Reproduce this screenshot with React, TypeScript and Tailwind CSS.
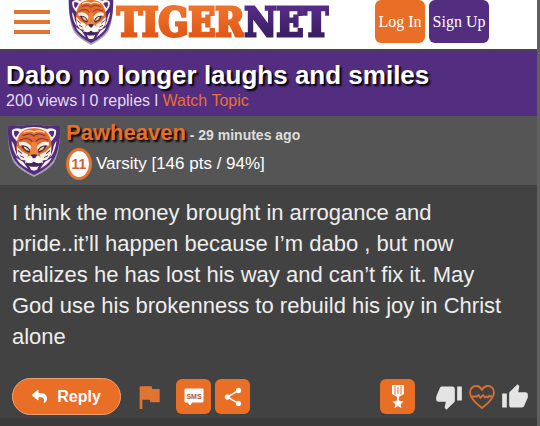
import React from 'react';
import { MdFlag, MdShare, MdThumbDown, MdThumbUp } from 'react-icons/md';
import { FaReply } from 'react-icons/fa';

function TigerShield({ className }: { className: string }) {
    return (
        <svg viewBox="0 0 54 52" preserveAspectRatio="none" className={className} aria-hidden="true">
            {/* shield */}
            <path d="M1 3 Q8 0 14 2 Q27 -1 40 2 Q46 0 53 3 C53.500 16 52 29 47 38 Q42 45 27 52 Q12 45 7 38 C2 29 0.500 16 1 3Z" fill="#a9a0b4" />
            <path d="M1 2.500 Q8 0 14 2 Q27 -1 40 2 Q46 0 53 2.500 C53.500 15 51.500 28 46 36 Q40 44 27 50 Q14 44 8 36 C2.500 28 0.500 15 1 2.500Z" fill="#522d80" />
            {/* light fur around the head */}
            <path d="M14 5 Q27 1 40 5 Q45 3 49 6 Q50 11 46 15 L44 17 L10 17 L8 15 Q4 11 5 6 Q9 3 14 5Z" fill="#fbf3df" />
            <path d="M4.500 17 Q7 19 8 25 L11 33 Q6 28 4.500 17ZM49.500 17 Q47 19 46 25 L43 33 Q48 28 49.500 17Z" fill="#fbf3df" />
            <path d="M9 33 L16 37 L21 44 Q12 39 9 33ZM45 33 L38 37 L33 44 Q42 39 45 33Z" fill="#fbf3df" />
            {/* ears */}
            <path d="M7 7 Q10 6 12.500 8 L9 13 Q6.500 11 7 7ZM47 7 Q44 6 41.500 8 L45 13 Q47.500 11 47 7Z" fill="#522d80" />
            {/* face */}
            <path d="M10 17 Q12 8 19 5.500 Q27 3 35 5.500 Q42 8 44 17 L45 24 L43 30 L37 34 L17 34 L11 30 L9 24Z" fill="#e46a28" />
            {/* forehead stripes */}
            <g fill="none" strokeLinecap="round">
                <path d="M17 8 Q23 5.500 27 8 Q31 5.500 37 8" stroke="#fbe3bd" strokeWidth="1.300" />
                <path d="M16 11.500 Q23 8 27 12 Q31 8 38 11.500" stroke="#743055" strokeWidth="1" />
                <path d="M13 16 Q21 12 25 17 M41 16 Q33 12 29 17" stroke="#743055" strokeWidth="1" />
            </g>
            {/* brows and eyes */}
            <path d="M12 18 Q20 15.500 25 23 L24 27 Q20 21 12 21ZM42 18 Q34 15.500 29 23 L30 27 Q34 21 42 21Z" fill="#fbf3df" />
            <path d="M14 21 Q21 20 24 27 L22.500 28.500 Q16 26 14 21ZM40 21 Q33 20 30 27 L31.500 28.500 Q38 26 40 21Z" fill="#44265f" />
            <path d="M16.500 22 Q20 22 22.500 26.500 Q18 26 16.500 22ZM37.500 22 Q34 22 31.500 26.500 Q36 26 37.500 22Z" fill="#f5e45c" />
            {/* cheeks */}
            <path d="M10 22 L15 27 L21 30 L20 36 L14 35 L10 30ZM44 22 L39 27 L33 30 L34 36 L40 35 L44 30Z" fill="#fbf3df" />
            <path d="M11 26 L15 29 M13 31 L17 33 M43 26 L39 29 M41 31 L37 33" stroke="#522d80" strokeWidth="1" />
            {/* nose and mouth */}
            <path d="M25 18 L29 18 L32 31 L27 33 L22 31Z" fill="#ef8340" />
            <path d="M19 34 Q23 29 27 32 Q31 29 35 34 L36 38 Q30 40 27 37 Q24 40 18 38Z" fill="#fffaf0" />
            <path d="M23.500 30.500 Q27 29 30.500 30.500 L28 33.500 L26 33.500Z" fill="#44265f" />
            <path d="M19 37.500 Q23 40 27 37 Q31 40 35 37.500 L33 43 Q27 46 21 43Z" fill="#44265f" />
            <path d="M22 41 L24 42 L30 42 L32 41 L30 45 Q27 46.500 24 45Z" fill="#fbf3df" />
        </svg>
    );
}

function SmsIcon() {
    return (
        <svg viewBox="0 0 20 18" className="h-[18px] w-5" aria-hidden="true">
            <path d="M1 1h18v13H8l-2 3-2-3H1Z" fill="#fff" stroke="#fff" strokeLinejoin="round" />
            <text x="10" y="10.500" textAnchor="middle" fontSize="7" fontWeight="700" fill="#b0561f">SMS</text>
        </svg>
    );
}

function MedalIcon() {
    return (
        <svg viewBox="0 0 14 24" className="h-6 w-[14px]" fill="#fff" aria-hidden="true">
            <path d="M1 0h12v9L7 12.500 1 9Z" />
            <path d="M4 1v8.500M10 1v8.500M7 2v7" stroke="#ea6f26" strokeWidth="1" />
            <path d="M6 11h2v3H6ZM7 12.500l1.600 3.600 4 .4-3 2.700.9 4L7 21.100l-3.500 2.100.9-4-3-2.700 4-.4Z" />
        </svg>
    );
}

function HeartPulse() {
    return (
        <svg viewBox="0 0 26 24" className="h-6 w-[26px]" fill="none" stroke="#d96f33" strokeWidth="1.800" strokeLinejoin="round" aria-hidden="true">
            <path d="M13 23 C9 20 1 14 1 7.500 C1 3.500 4 1 7 1 C10 1 12 3 13 5 C14 3 16 1 19 1 C22 1 25 3.500 25 7.500 C25 14 17 20 13 23Z" />
            <path d="M3 11.500h5l1.500-1.500 2 3 2.500-3 2 2.500 1.500-1 1.500 1 1.500-2 1 1h2" />
        </svg>
    );
}

const squareButton = 'flex size-[35px] items-center justify-center rounded-md bg-[#ea6f26] text-white';
const wordmark = "bg-clip-text font-['DejaVu_Serif_Condensed','DejaVu_Serif',serif] text-[39px] leading-[44px] font-bold text-transparent [-webkit-text-stroke:3px_transparent]";

export default function App() {
    return (
        <div className="min-h-screen border-r-[3px] border-[#606060] bg-[#3b3b3b] font-['Liberation_Sans',Arial,sans-serif]">
            <header className="flex h-[51px] items-start overflow-hidden border-b-2 border-[#494052] bg-white pl-[14px]">
                <button aria-label="Menu" className="mt-[10px] flex w-9 shrink-0 flex-col gap-[6px]">
                    <span className="h-1 w-full bg-[#e07533]" />
                    <span className="h-1 w-full bg-[#e07533]" />
                    <span className="h-1 w-full bg-[#e07533]" />
                </button>
                <a href="#" className="ml-[18px] flex shrink-0 items-start">
                    <TigerShield className="-mt-1 h-[49px] w-[46px]" />
                    <span className={`${wordmark} ml-[2px] bg-linear-to-b from-[#f07a30] to-[#dd4f10]`}>TIGER</span>
                    <span className={`${wordmark} bg-linear-to-b from-[#5d2f92] to-[#331a58]`}>NET</span>
                </a>
                <nav className="mr-12 ml-auto flex shrink-0 gap-1 font-['Liberation_Serif',serif] text-base text-white">
                    <a href="#" className="flex h-[43px] w-[50px] items-center justify-center rounded-md bg-[#ea6f26]">Log In</a>
                    <a href="#" className="flex h-[43px] w-[60px] items-center justify-center rounded-md bg-[#522d80]">Sign Up</a>
                </nav>
            </header>

            <section className="h-[65px] bg-[#522d80] px-[6px] pt-2">
                <h1 className="text-[26px] leading-8 font-bold text-white [text-shadow:2px_2px_2px_#000]">Dabo no longer laughs and smiles</h1>
                <p className="text-base leading-5 text-[#e6dcf0]">
                    200 views l 0 replies l <a href="#" className="text-[#ea6f33]">Watch Topic</a>
                </p>
            </section>

            <article>
                <div className="flex h-[69px] gap-[5px] bg-[#555] pt-2 pl-[7px]">
                    <TigerShield className="h-[53px] w-[54px]" />
                    <div>
                        <p className="text-sm leading-[18px] font-bold text-[#ddd]">
                            <a href="#" className="text-[22px] text-[#ea6f26] [text-shadow:2px_2px_2px_#000]">Pawheaven</a> - 29 minutes ago
                        </p>
                        <div className="mt-1 flex items-center gap-1 text-[17px] text-white">
                            <span className="flex h-8 w-[26px] items-center justify-center rounded-[50%] border-[3px] border-[#e07533] bg-white text-sm font-bold text-[#d2622b]">11</span>
                            <span>Varsity [146 pts / 94%]</span>
                        </div>
                    </div>
                </div>

                <div className="bg-[#424242] px-3 pt-3 pb-[3px]">
                    <p className="pr-5 text-[22px] leading-[31px] text-[#eee]">
                        I think the money brought in arrogance and pride..it’ll happen because I’m dabo , but now realizes he has lost his way and can’t fix it. May God use his brokenness to rebuild his joy in Christ alone
                    </p>
                    <div className="mt-[26px] flex items-center">
                        <button className="flex h-[37px] w-[109px] items-center justify-center gap-[10px] rounded-full border border-[#f0a070] bg-[#ea6f26] text-base font-bold text-white">
                            <FaReply size={15} /> Reply
                        </button>
                        <button aria-label="Report" className="ml-3 text-[#e07533]"><MdFlag size={32} /></button>
                        <button aria-label="Share by SMS" className={`${squareButton} ml-[11px]`}><SmsIcon /></button>
                        <button aria-label="Share" className={`${squareButton} ml-1`}><MdShare size={22} /></button>
                        <button aria-label="Award" className={`${squareButton} mr-5 ml-auto`}><MedalIcon /></button>
                        <div className="-mr-1 flex items-center gap-[6px] text-[#e4e4e4]">
                            <button aria-label="Dislike"><MdThumbDown size={28} /></button>
                            <button aria-label="Love"><HeartPulse /></button>
                            <button aria-label="Like"><MdThumbUp size={28} /></button>
                        </div>
                    </div>
                </div>
            </article>
        </div>
    );
}
